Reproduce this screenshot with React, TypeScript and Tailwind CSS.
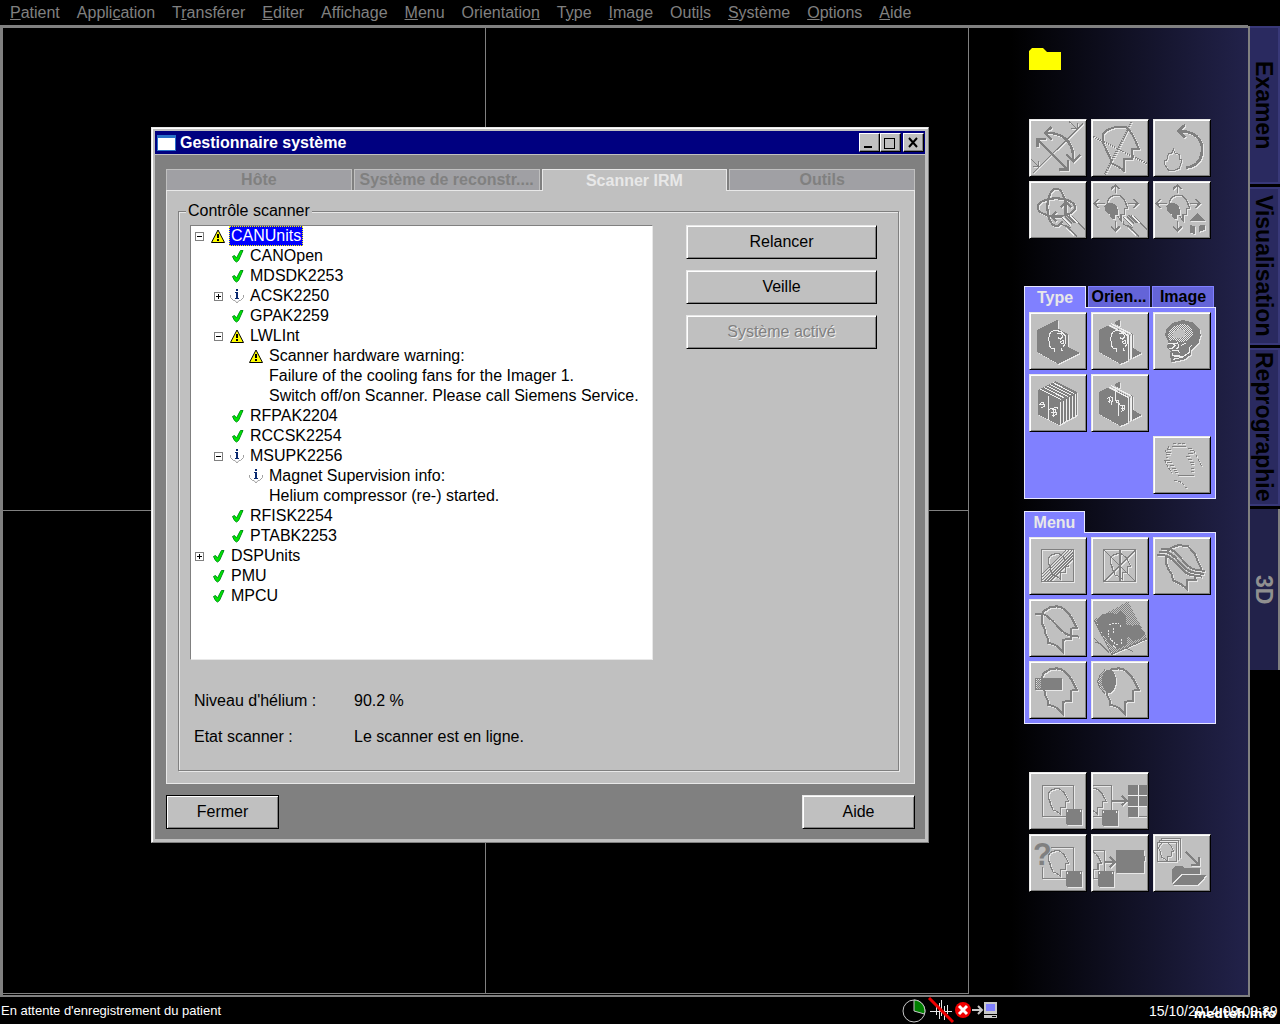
import React, { type ReactNode } from "react";

const HEAD =
  "M38 52L43 37L63 25L83 22L98 25L118 42L128 57L138 77L143 87L126 89V120L101 122V157L88 144L73 135L58 132L57 120L48 102L46 87L38 72Z";

const ARROWS =
  "M73 37V12M60 24L73 12L86 24M42 67H10M23 54L10 67L23 81M110 67H140M127 54L140 67L127 81M73 120V149M60 136L73 149L86 136";

type GlyphProps = { children: ReactNode; over?: ReactNode };

/* Engraved monochrome glyph: a light copy shifted down-right below the grey drawing. */
function Glyph({ children, over }: GlyphProps) {
  return (
    <svg
      viewBox="6 6 162 162"
      className="block h-[54px] w-[54px]"
      fill="none"
      strokeWidth="6"
      shapeRendering="crispEdges"
      aria-hidden="true"
    >
      <defs>
        <pattern id="dither" width="6" height="6" patternUnits="userSpaceOnUse">
          <rect width="3" height="3" fill="#808080" />
          <rect x="3" y="3" width="3" height="3" fill="#808080" />
        </pattern>
      </defs>
      <g transform="translate(3 3)" className="text-[#e8e8e8]" stroke="currentColor">
        {children}
      </g>
      <g className="text-[#808080]" stroke="currentColor">
        {children}
      </g>
      {over}
    </svg>
  );
}

function SmallHead({ x, y }: { x: number; y: number }) {
  return (
    <g transform={`translate(${x} ${y}) scale(.58)`}>
      <path d={HEAD} strokeWidth="6" />
    </g>
  );
}

const hand = (
  <g>
    <path d="M98 107L118 104L140 108L168 146V168H140L104 140Z" fill="#c0c0c0" stroke="none" />
    <path
      d="M98 108L124 134M108 106L130 128M113 102L137 126M120 104L142 126M130 106L150 128L168 146M98 120V130L116 138L138 160L144 166M106 132L126 140"
      stroke="#808080"
      strokeWidth="3"
    />
    <path d="M101 108L127 134M123 104L145 126M110 140L136 164" stroke="#f0f0f0" strokeWidth="3" />
  </g>
);

const headMove = (
  <>
    <path d={ARROWS} strokeWidth="5" />
    <path d="M49 65L53 52L68 43H87L100 56L110 82H101V100H90V118L80 106" strokeWidth="4" />
    <path d="M40 76L50 66H64L76 74L82 90L80 102H72V116L60 112L56 100L44 92Z" fill="currentColor" stroke="none" />
  </>
);

const disk = (x: number, y: number) => (
  <path d={`M${x} ${y}h48v48h-44l-4 -4z`} fill="currentColor" stroke="none" />
);

const diskTicks = (x: number, y: number) => (
  <path d={`M${x + 5} ${y + 2}v6M${x + 43} ${y + 2}v6`} stroke="#f0f0f0" strokeWidth="3" />
);

const blocks = (
  <>
    <path d="M24 54L50 41L110 72V146L88 156L24 120Z" fill="currentColor" stroke="none" />
    <path d="M68 33L87 22V44Z" fill="currentColor" stroke="none" />
    <path d="M127 108L152 123L127 136Z" fill="currentColor" stroke="none" />
    <path d="M56 40L116 71V142M64 36L124 66V138" strokeWidth="3" />
  </>
);

const face = (
  <path
    d="M62 66L68 58L82 55L98 60L109 72L110 92L102 106M62 66L58 84L62 90L61 100L66 108H76L77 120M84 66L96 64L102 74L94 82L86 76M92 88L104 86V96L94 92M96 108L100 118"
    stroke="#f0f0f0"
    strokeWidth="3"
  />
);

const blobs = (
  <path
    d="M74 42V80H82V126M48 74L58 68L66 72L64 84M50 82L60 80L62 92M54 72V88M88 96L100 94V108L90 112M90 102H98M94 94V110M74 82L88 92"
    stroke="#f0f0f0"
    strokeWidth="3"
  />
);

const icons = {
  rotate3d: (
    <Glyph>
      <path d="M163 13L13 161M121 8L143 29M127 29H145V12M6 120L28 142M12 142H29V126" strokeWidth="3" />
      <path d="M25 60L115 151M25 84V60H50M90 151H116V124M48 42C80 40 135 50 133 125M68 24L48 42L68 62M113 106L133 128L153 108" strokeWidth="7" />
    </Glyph>
  ),
  headAxes: (
    <Glyph>
      <path d="M37 45L48 33L75 23H105L122 43L132 63L143 89H124V120H99V155L82 143L62 133L57 115L48 98L37 73Z" strokeWidth="6" />
      <path d="M122 8L42 166M7 53L168 133" strokeDasharray="4 3" />
    </Glyph>
  ),
  rotateBack: (
    <Glyph>
      <path d="M76 36C125 36 150 60 147 95C145 130 122 145 98 145M96 18L76 36L96 55" strokeWidth="8" />
      <path d="M34 123L41 123L46 105L56 103L61 91L66 103L78 106V121H87L79 148L61 155L46 153L36 138Z" strokeWidth="3" />
    </Glyph>
  ),
  orbit: (
    <Glyph over={hand}>
      <ellipse cx="82" cy="79" rx="56" ry="27" />
      <ellipse cx="82" cy="79" rx="27" ry="56" />
      <path d="M111 107V64M96 79L111 64L127 79M68 107H98M82 92L68 107L82 122" strokeWidth="6" />
    </Glyph>
  ),
  headPan: <Glyph over={hand}>{headMove}</Glyph>,
  headHome: (
    <Glyph>
      {headMove}
      <path d="M108 120L132 96L157 120ZM112 132L126 136V160L112 155ZM138 134L155 131V147L138 152Z" fill="currentColor" stroke="none" />
    </Glyph>
  ),
  slab: (
    <Glyph over={face}>
      <path d="M25 54L87 22V50L118 67V106L152 123L88 156L25 120Z" fill="currentColor" stroke="none" />
    </Glyph>
  ),
  slabs: (
    <Glyph over={<>{face}<path d="M53 39L113 70V144M61 35L121 66V140" stroke="#f0f0f0" strokeWidth="3" /></>}>{blocks}</Glyph>
  ),
  skull: (
    <Glyph
      over={
        <>
          <path d="M44 72L50 54L66 42L94 34L116 48L122 68L108 84L84 92L62 84L50 88Z" fill="#e8e8e8" />
          <path d="M44 72L50 54L66 42L94 34L116 48L122 68L108 84L84 92L62 84L50 88Z" fill="url(#dither)" />
          <path d="M60 60L80 50L98 58L96 72L78 80L60 76Z" fill="#c0c0c0" />
          <path d="M46 94H60L66 100L58 108H48M62 96L74 92L78 104L70 112M56 116H76L80 124M58 122V130H80M60 142L88 136L108 122V108L116 100M84 100L98 94M64 134H90" stroke="#f0f0f0" strokeWidth="3" />
        </>
      }
    >
      <path d="M36 69L41 49L61 32L91 24L121 32L139 49L143 69L136 94L116 112L113 129L91 144L56 150L51 134L53 117L41 107L46 89Z" fill="currentColor" stroke="none" />
    </Glyph>
  ),
  stack: (
    <Glyph
      over={
        <path
          d="M58 66V106L84 100V104M58 106V138M34 88L44 84L46 98L36 100M30 92H48M70 108L80 106L82 122L70 126M66 116H80M74 104V128M93 84V150M102 80V146M112 75V141M121 70V137M130 66V132M139 61V128M34 45L97 77M44 40L106 72M53 35L116 67M62 31L125 62M72 26L134 58"
          stroke="#f0f0f0"
          strokeWidth="3"
        />
      }
    >
      <path d="M27 48L80 22L143 54V124L90 153L27 122Z" fill="currentColor" stroke="none" />
    </Glyph>
  ),
  slabsSplit: (
    <Glyph over={<>{blobs}<path d="M53 39L113 70V144M61 35L121 66V140" stroke="#f0f0f0" strokeWidth="3" /></>}>{blocks}</Glyph>
  ),
  ghost: (
    <Glyph>
      <path d="M56 32H100M42 40H54M40 48H54M38 56H50M38 64H46M36 74H52M42 80H58M50 88H64M58 96H68M62 104H72M66 110H76M74 117H122M104 36H116M110 44H122M106 52H120M100 60H112M104 70H118M112 78H122M114 86H124M114 96H124M114 106H124" strokeWidth="3" />
      <path d="M60 24L96 22M122 44L146 90M34 72L56 112M62 132C80 134 92 142 100 156M48 32L36 48" strokeDasharray="9 5" strokeWidth="3" />
    </Glyph>
  ),
  obliqueSlices: (
    <Glyph>
      <rect x="38" y="38" width="96" height="96" strokeWidth="4" />
      <SmallHead x={36} y={37} />
      <path d="M38 112L112 38M38 121L121 38M38 130L130 38M44 134L134 44M53 134L134 53M62 134L134 62" strokeWidth="3" />
    </Glyph>
  ),
  radialSlices: (
    <Glyph>
      <rect x="38" y="38" width="96" height="96" strokeWidth="4" />
      <SmallHead x={36} y={37} />
      <path d="M38 38L134 134M134 38L38 134" strokeWidth="3" />
      <path d="M86 38V134" strokeWidth="6" />
    </Glyph>
  ),
  curvedSlices: (
    <Glyph>
      <path d="M44 44L55 32L78 24L105 28L125 50L135 75L145 96M126 118L128 130H101V155L85 142L60 130L56 112L45 95L38 75V60" strokeWidth="6" />
      <path d="M13 55H33C66 58 85 112 118 115L148 119M18 45H38C70 48 88 102 120 106L152 111M24 35H46C76 38 92 90 124 97L156 102" />
    </Glyph>
  ),
  curvedCut: (
    <Glyph>
      <path d={HEAD} strokeWidth="6" />
      <path d="M18 44H38C70 50 95 105 120 108L150 113" />
    </Glyph>
  ),
  volume: (
    <Glyph
      over={
        <>
          <path d="M9 62L112 7L168 118L62 166Z" fill="url(#dither)" />
          <path d="M18 62L34 46L60 40L74 46L88 36L104 48L106 76L124 80L142 78L163 102L150 118L124 126L110 112L106 138L80 150L62 140L42 116L22 86Z" fill="#808080" />
          <path d="M54 78L62 74H84L90 84M52 92V110L60 122M66 88V106M62 124L72 134L84 140M92 120L90 136M66 140L76 146" stroke="#e8e8e8" strokeWidth="3" strokeDasharray="6 3" />
          <path d="M9 118L34 140M12 130L28 134M62 166L168 120M30 136L54 160M106 148L126 158" stroke="#808080" strokeWidth="3" />
        </>
      }
    >
      <path d="M9 62L62 166L168 118" strokeWidth="3" />
    </Glyph>
  ),
  rectCut: (
    <Glyph over={<rect x="21" y="53" width="15" height="32" fill="url(#dither)" />}>
      <path d={HEAD} strokeWidth="6" />
      <rect x="19" y="52" width="78" height="34" strokeWidth="3" />
      <rect x="36" y="51" width="61" height="36" fill="currentColor" stroke="none" />
    </Glyph>
  ),
  ellipseCut: (
    <Glyph over={<path d="M42 28L26 44L20 62L26 80L42 96L34 76V48Z" fill="url(#dither)" />}>
      <path d={HEAD} strokeWidth="6" />
      <path d="M42 26L26 44L20 62L26 80L42 98" strokeWidth="3" />
      <ellipse cx="54" cy="61" rx="21" ry="35" fill="currentColor" stroke="none" />
    </Glyph>
  ),
  saveImage: (
    <Glyph over={diskTicks(111, 111)}>
      <path d="M111 134H41V41H134V111" strokeWidth="4" />
      <SmallHead x={36} y={37} />
      {disk(111, 111)}
    </Glyph>
  ),
  saveGrid: (
    <Glyph over={<>{diskTicks(33, 114)}<path d="M142 40V134M111 70H168M111 103H168" stroke="#f0f0f0" strokeWidth="3" /></>}>
      <path d="M6 41H62V113M6 134H33" strokeWidth="4" />
      <SmallHead x={-38} y={37} />
      {disk(33, 114)}
      <path d="M62 86H108M92 71L108 86L92 101" />
      <path d="M111 39H172V103H142V134H111Z" fill="currentColor" stroke="none" />
      <path d="M142 134H168" strokeWidth="3" />
    </Glyph>
  ),
  queryImage: (
    <Glyph
      over={
        <>
          {diskTicks(111, 111)}
          <text x="12" y="92" fontSize="92" fontWeight="700" fontFamily="Liberation Sans" fill="#808080">
            ?
          </text>
        </>
      }
    >
      <path d="M111 134H41V98M67 41H134V111" strokeWidth="4" />
      <SmallHead x={36} y={37} />
      {disk(111, 111)}
    </Glyph>
  ),
  saveFilm: (
    <Glyph over={diskTicks(21, 111)}>
      <path d="M6 50H41V111M6 134H21" strokeWidth="4" />
      <SmallHead x={-52} y={37} />
      {disk(21, 111)}
      <path d="M42 84H74M56 69L74 84L56 99" />
      <path d="M75 48H160V66H163V82H160V117H75Z" fill="currentColor" stroke="none" />
    </Glyph>
  ),
  archive: (
    <Glyph>
      <path d="M13 25H71V83H13ZM19 25V19H77V77M25 19V13H83V71" strokeWidth="3" />
      <g transform="translate(2 16) scale(.42)">
        <path d={HEAD} strokeWidth="7" />
      </g>
      <path d="M98 53L138 93M115 93H138V70" strokeWidth="6" />
      <path d="M58 148V105L68 95H85L95 102H142V119H86ZM60 153L88 124H160L135 153Z" fill="currentColor" stroke="none" />
    </Glyph>
  ),
};

type IconName = keyof typeof icons;
type Tool = [IconName, string] | null;

const raised =
  "border border-t-[#e8e8e8] border-l-[#e8e8e8] border-r-black border-b-black bg-[#c0c0c0] shadow-[inset_1px_1px_0_#fff,inset_-1px_-1px_0_#808080] ";

function ToolGrid({ tools }: { tools: Tool[] }) {
  return (
    <div className="grid grid-cols-[58px_58px_58px] gap-1">
      {tools.map((tool, i) =>
        tool ? (
          <button key={i} type="button" aria-label={tool[1]} className={raised + "h-[58px] p-px"}>
            {icons[tool[0]]}
          </button>
        ) : (
          <span key={i} className="h-[58px]" />
        ),
      )}
    </div>
  );
}

function PushButton({ children, className = "", disabled = false }: { children: ReactNode; className?: string; disabled?: boolean }) {
  return (
    <button
      type="button"
      disabled={disabled}
      className={
        raised +
        "h-[34px] text-center disabled:text-[#808080] disabled:[text-shadow:1px_1px_0_#f0f0f0] " +
        className
      }
    >
      {children}
    </button>
  );
}

const menus: [string, string, string][] = [
  ["", "P", "atient"],
  ["Appli", "c", "ation"],
  ["T", "r", "ansférer"],
  ["", "E", "diter"],
  ["Afficha", "g", "e"],
  ["", "M", "enu"],
  ["Orientatio", "n", ""],
  ["T", "y", "pe"],
  ["", "I", "mage"],
  ["Outi", "l", "s"],
  ["", "S", "ystème"],
  ["", "O", "ptions"],
  ["", "A", "ide"],
];

type Status = "ok" | "warn" | "info" | null;
type Row = { level: 0 | 1 | 2; status: Status; text: string; toggle?: "+" | "-"; selected?: boolean };

const rows: Row[] = [
  { level: 0, status: "warn", text: "CANUnits", toggle: "-", selected: true },
  { level: 1, status: "ok", text: "CANOpen" },
  { level: 1, status: "ok", text: "MDSDK2253" },
  { level: 1, status: "info", text: "ACSK2250", toggle: "+" },
  { level: 1, status: "ok", text: "GPAK2259" },
  { level: 1, status: "warn", text: "LWLInt", toggle: "-" },
  { level: 2, status: "warn", text: "Scanner hardware warning:" },
  { level: 2, status: null, text: "Failure of the cooling fans for the Imager 1." },
  { level: 2, status: null, text: "Switch off/on Scanner. Please call Siemens Service." },
  { level: 1, status: "ok", text: "RFPAK2204" },
  { level: 1, status: "ok", text: "RCCSK2254" },
  { level: 1, status: "info", text: "MSUPK2256", toggle: "-" },
  { level: 2, status: "info", text: "Magnet Supervision info:" },
  { level: 2, status: null, text: "Helium compressor (re-) started." },
  { level: 1, status: "ok", text: "RFISK2254" },
  { level: 1, status: "ok", text: "PTABK2253" },
  { level: 0, status: "ok", text: "DSPUnits", toggle: "+" },
  { level: 0, status: "ok", text: "PMU" },
  { level: 0, status: "ok", text: "MPCU" },
];

const indents = ["pl-1", "pl-[23px]", "pl-[42px]"];

function StatusIcon({ status }: { status: Status }) {
  if (status === "ok")
    return (
      <svg viewBox="0 0 14 14" className="h-3.5 w-3.5" aria-hidden="true">
        <path d="M2.500 7.500L4.500 6.500L6.500 9L10.500 1.500H13L8.500 11.500L6.500 13L4.500 11.500Z" fill="#00e800" stroke="#009018" strokeWidth="1" />
      </svg>
    );
  if (status === "warn")
    return (
      <svg viewBox="0 0 14 14" className="h-3.5 w-3.5" aria-hidden="true">
        <path d="M7 1L13.5 13.5H.5Z" fill="#ffff00" stroke="#000" strokeWidth="1" />
        <path d="M6 5H8V9H6ZM6 10H8V12H6Z" fill="#000" shapeRendering="crispEdges" />
      </svg>
    );
  if (status === "info")
    return (
      <svg viewBox="0 0 14 14" className="h-3.5 w-3.5" aria-hidden="true">
        <path d="M0.500 6V8.500L3.500 11.500H5L7 14L9 11.500H10.500L13.500 8.500V6" fill="none" stroke="#a0a0a0" strokeWidth="1" />
        <path d="M6 0H8V2H6ZM5 3H8V9H9V10H5V9H6V4H5Z" fill="#0a2a70" shapeRendering="crispEdges" />
      </svg>
    );
  return <span className="w-3.5" />;
}

function TreeRow({ row }: { row: Row }) {
  return (
    <li role="treeitem" aria-selected={!!row.selected} className={"flex h-5 items-center " + indents[row.level]}>
      {row.toggle ? (
        <button type="button" aria-label={row.toggle === "+" ? "Développer" : "Réduire"} className="h-[9px] w-[9px]">
          <svg viewBox="0 0 9 9" className="block h-[9px] w-[9px]" shapeRendering="crispEdges" aria-hidden="true">
            <path d="M0 0H9V9H0ZM1 1V8H8V1Z" fill="#808080" fillRule="evenodd" />
            <path d={row.toggle === "+" ? "M2 4H7V5H2ZM4 2H5V7H4Z" : "M2 4H7V5H2Z"} fill="#000" />
          </svg>
        </button>
      ) : (
        <span className="w-[9px]" />
      )}
      <span className="ml-[7px] mr-1 flex w-3.5">
        <StatusIcon status={row.status} />
      </span>
      <span
        className={
          row.selected
            ? "h-5 bg-[#0000ff] px-0.5 text-white outline-1 -outline-offset-1 outline-dotted outline-[#ffff00]"
            : "whitespace-nowrap px-0.5"
        }
      >
        {row.text}
      </span>
    </li>
  );
}

const dialogTabs = ["Hôte", "Système de reconstr....", "Scanner IRM", "Outils"];

function SystemManager() {
  return (
    <section
      role="dialog"
      aria-label="Gestionnaire système"
      className="absolute left-[148px] top-[99px] w-[778px] border border-t-[#e8e8e8] border-l-[#e8e8e8] border-r-[#808080] border-b-[#808080] bg-[#c0c0c0] p-[3px] shadow-[inset_1px_1px_0_#fff]"
    >
      <header className="flex h-[23px] items-center bg-[#000080] pl-0.5 pr-px text-white">
        <span className="mr-1 h-4 w-[19px] border border-t-3 border-[#2a70c8] bg-white" />
        <h1 className="flex-1 font-bold">Gestionnaire système</h1>
        {["Réduire", "Agrandir", "Fermer"].map((label, i) => (
          <button
            key={label}
            type="button"
            aria-label={label}
            className={
              "h-[19px] w-[21px] border border-t-white border-l-white border-r-black border-b-black bg-[#c0c0c0] shadow-[inset_-1px_-1px_0_#808080] " +
              (i === 2 ? "ml-0.5" : "")
            }
          >
            <svg viewBox="0 0 19 17" className="block h-[17px] w-[19px]" shapeRendering="crispEdges" fill="none" stroke="#000" strokeWidth="2" aria-hidden="true">
              {i === 0 && <path d="M4 13H12" />}
              {i === 1 && <path d="M3.500 4.500H13.500V14.500H3.500ZM3 4H14" strokeWidth="1" />}
              {i === 2 && <path d="M5 4L13 13M13 4L5 13" shapeRendering="auto" />}
            </svg>
          </button>
        ))}
      </header>
      <div className="mt-px bg-[#808080] pb-[10px] pl-[11px] pr-[10px] pt-[14px]">
        <div role="tablist" className="grid grid-cols-4 gap-x-0.5 font-bold">
          {dialogTabs.map((label, i) => (
            <button
              key={label}
              type="button"
              role="tab"
              aria-selected={i === 2}
              className={
                i === 2
                  ? "relative z-10 -mb-px h-[22px] overflow-hidden whitespace-nowrap border border-b-0 border-[#e8e8e8] bg-[#c0c0c0] leading-5 text-[#e8e8e8]"
                  : "h-[21px] overflow-hidden whitespace-nowrap border border-b-0 border-[#c0c0c0] bg-[#a0a0a4] leading-5 text-[#808080]"
              }
            >
              {label}
            </button>
          ))}
        </div>
        <div className="border border-[#e8e8e8] bg-[#c0c0c0] pb-3 pl-[11px] pr-[15px] pt-[10px]">
          <fieldset className="border border-[#808080] pb-[23px] pl-[11px] pr-[21px] shadow-[1px_1px_0_#e8e8e8,inset_1px_1px_0_#e8e8e8]">
            <legend className="-ml-1 bg-[#c0c0c0] px-0.5 leading-5">Contrôle scanner</legend>
            <div className="mt-1 flex gap-[33px]">
              <ul role="tree" aria-label="Contrôle scanner" className="h-[435px] flex-1 border border-t-[#808080] border-l-[#808080] border-r-[#e8e8e8] border-b-[#e8e8e8] bg-white">
                {rows.map((row) => (
                  <TreeRow key={row.text} row={row} />
                ))}
              </ul>
              <div className="flex w-[191px] flex-col gap-[11px]">
                <PushButton>Relancer</PushButton>
                <PushButton>Veille</PushButton>
                <PushButton disabled>Système activé</PushButton>
              </div>
            </div>
            <dl className="ml-1 mt-[31px] grid grid-cols-[160px_1fr] gap-y-4">
              <dt>Niveau d'hélium :</dt>
              <dd>90.2 %</dd>
              <dt>Etat scanner :</dt>
              <dd>Le scanner est en ligne.</dd>
            </dl>
          </fieldset>
        </div>
        <div className="mt-[11px] flex justify-between">
          <PushButton className="w-[113px] outline-1 -outline-offset-1 outline-black">Fermer</PushButton>
          <PushButton className="w-[113px]">Aide</PushButton>
        </div>
      </div>
    </section>
  );
}

const panelClass = "border border-[#e8e8ff] bg-[#8080ff] p-1";

function SideTools() {
  return (
    <aside className="w-[279px] shrink-0 bg-linear-to-r/srgb from-black from-15% to-[#22224a] pl-[55px] pt-5">
      <svg viewBox="0 0 32 22" className="ml-[5px] block h-[22px] w-8" aria-hidden="true">
        <path d="M0 22V3L3 0H14L18 4H32V22Z" fill="#ffff00" />
      </svg>
      <div className="ml-[5px] mt-[49px]">
        <ToolGrid
          tools={[
            ["rotate3d", "Rotation libre"],
            ["headAxes", "Axes"],
            ["rotateBack", "Rotation"],
            ["orbit", "Orbite"],
            ["headPan", "Déplacer"],
            ["headHome", "Position initiale"],
          ]}
        />
      </div>
      <div className="mt-[47px] w-48">
        <div role="tablist" className="flex items-end font-bold">
          <button type="button" role="tab" aria-selected="true" className="relative z-10 -mb-px h-[22px] w-[62px] border border-b-0 border-[#e8e8ff] bg-[#8080ff] leading-5 text-[#e8e8e8]">
            Type
          </button>
          <button type="button" role="tab" aria-selected="false" className="ml-0.5 h-[21px] w-[62px] border border-b-0 border-[#8080ff] bg-[#6464d8] leading-5 text-black">
            Orien...
          </button>
          <button type="button" role="tab" aria-selected="false" className="ml-0.5 h-[21px] w-[62px] border border-b-0 border-[#8080ff] bg-[#6464d8] leading-5 text-black">
            Image
          </button>
        </div>
        <div className={panelClass}>
          <ToolGrid
            tools={[
              ["slab", "MPR"],
              ["slabs", "MPR parallèle"],
              ["skull", "Volume"],
              ["stack", "Pile"],
              ["slabsSplit", "Pile divisée"],
              null,
              null,
              null,
              ["ghost", "Contour"],
            ]}
          />
        </div>
      </div>
      <div className="mt-3 w-48">
        <div role="tablist" className="flex font-bold">
          <button type="button" role="tab" aria-selected="true" className="relative z-10 -mb-px h-[22px] w-[61px] border border-b-0 border-[#e8e8ff] bg-[#8080ff] leading-5 text-[#e8e8e8]">
            Menu
          </button>
        </div>
        <div className={panelClass}>
          <ToolGrid
            tools={[
              ["obliqueSlices", "Coupes parallèles"],
              ["radialSlices", "Coupes radiales"],
              ["curvedSlices", "Coupes courbes"],
              ["curvedCut", "Coupe courbe"],
              ["volume", "Volume"],
              null,
              ["rectCut", "Découpe rectangulaire"],
              ["ellipseCut", "Découpe elliptique"],
              null,
            ]}
          />
        </div>
      </div>
      <div className="ml-[5px] mt-12">
        <ToolGrid
          tools={[
            ["saveImage", "Enregistrer l'image"],
            ["saveGrid", "Enregistrer la série"],
            null,
            ["queryImage", "Rechercher l'image"],
            ["saveFilm", "Enregistrer le film"],
            ["archive", "Archiver"],
          ]}
        />
      </div>
    </aside>
  );
}

function TaskTabs() {
  return (
    <nav className="flex w-8 shrink-0 flex-col pt-px text-[23px] font-bold leading-7" aria-label="Tâches">
      {["Examen", "Visualisation", "Reprographie"].map((label) => (
        <div key={label} className="h-[161px] border-l-2 border-[#808080]">
          <button
            type="button"
            className="flex h-[158px] w-full items-center justify-center border-2 border-l-0 border-[#383878] bg-[#2a2a60] text-black [writing-mode:vertical-rl]"
          >
            {label}
          </button>
        </div>
      ))}
      <button
        type="button"
        aria-current="page"
        className="flex h-[161px] w-full items-center justify-center border-y-2 border-r-2 border-[#808080] bg-[#22224a] text-[#909090] [writing-mode:vertical-rl]"
      >
        3D
      </button>
      <div className="flex-1 border-l-2 border-[#808080]" />
    </nav>
  );
}

export default function App() {
  return (
    <div className="flex min-h-screen flex-col bg-black font-['Liberation_Sans',Arial,sans-serif] text-[16px] leading-5 text-black">
      <nav className="flex h-[25px] items-center pl-0.5 text-[#808080]" aria-label="Menu principal">
        {menus.map(([before, key, after]) => (
          <button key={before + key + after} type="button" className="pl-2 pr-[9px]">
            {before}
            <u>{key}</u>
            {after}
          </button>
        ))}
      </nav>
      <div className="flex flex-1">
        <div className="flex flex-1 border-b-2 border-l-3 border-t-3 border-[#808080]">
          <main className="relative flex flex-1 pb-px">
            <div className="grid flex-1 grid-cols-2 grid-rows-2 border-b border-r border-[#808080]">
              <div className="border-b border-r border-[#808080]" />
              <div className="border-b border-[#808080]" />
              <div className="border-r border-[#808080]" />
              <div />
            </div>
            <SystemManager />
          </main>
          <SideTools />
        </div>
        <TaskTabs />
      </div>
      <footer className="flex h-[27px] items-center text-white">
        <span className="flex-1 pl-px text-[13px]">En attente d'enregistrement du patient</span>
        <svg viewBox="0 0 98 27" className="mr-[149px] h-[27px] w-[98px]" fill="none" aria-hidden="true">
          <circle cx="12" cy="14" r="11" stroke="#c8c8c8" strokeWidth="1" />
          <path d="M12 14V3A11 11 0 0 1 22.500 17Z" fill="#008000" stroke="#c8c8c8" strokeWidth="1" />
          <path d="M28 14H50M34 10V18M37 6V22M39 3V19M42 9V23M45 8V17" stroke="#e8e8e8" strokeWidth="1" shapeRendering="crispEdges" />
          <path d="M27 1L51 25" stroke="#f00000" strokeWidth="3" />
          <circle cx="61" cy="13" r="8" fill="#f00000" />
          <path d="M57 9L65 17M65 9L57 17" stroke="#fff" strokeWidth="3" />
          <path d="M70 13H80M76 9L80 13L76 17" stroke="#c8c8c8" strokeWidth="2" />
          <path d="M82 5H95V17H82ZM82 18H95V21H82Z" fill="#c8c8c8" />
          <path d="M84 7H93V14H84Z" fill="#8080ff" />
          <path d="M90 19H94V20H90Z" fill="#000" />
        </svg>
        <div className="relative h-[27px] w-[131px] overflow-hidden whitespace-nowrap">
          <time className="text-[14px] leading-7">15/10/2014 09:09:39</time>
          <span className="absolute bottom-0 right-1 font-['DejaVu_Sans',sans-serif] text-[12px] font-bold leading-5">medteh.info</span>
        </div>
      </footer>
    </div>
  );
}
